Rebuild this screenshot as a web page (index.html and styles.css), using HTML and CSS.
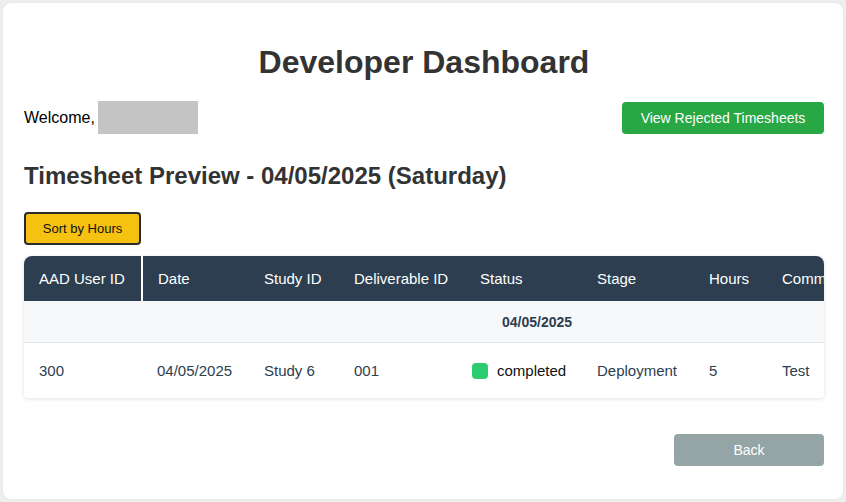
FILE: index.html
```html
<!DOCTYPE html>
<html>
<head>
<meta charset="utf-8">
<link rel="stylesheet" href="styles.css">
</head>
<body>
<div class="card">
  <h1 class="title">Developer Dashboard</h1>
  <div class="welcome-row">
    <div class="welcome">Welcome, <span class="name-box"></span></div>
    <button class="btn btn-green">View Rejected Timesheets</button>
  </div>
  <h2 class="subtitle">Timesheet Preview - 04/05/2025 (Saturday)</h2>
  <button class="btn btn-sort">Sort by Hours</button>
  <div class="table-wrap">
    <table class="sheet">
      <colgroup>
        <col class="c1"><col class="c2"><col class="c3"><col class="c4"><col class="c5"><col class="c6"><col class="c7"><col class="c8">
      </colgroup>
      <thead>
        <tr>
          <th class="first">AAD User ID</th>
          <th>Date</th>
          <th>Study ID</th>
          <th>Deliverable ID</th>
          <th>Status</th>
          <th>Stage</th>
          <th>Hours</th>
          <th>Comments</th>
        </tr>
      </thead>
      <tbody>
        <tr class="group-row"><td colspan="8">04/05/2025</td></tr>
        <tr class="data-row">
          <td>300</td>
          <td>04/05/2025</td>
          <td>Study 6</td>
          <td>001</td>
          <td class="status"><span class="dot"></span>completed</td>
          <td>Deployment</td>
          <td>5</td>
          <td>Test</td>
        </tr>
      </tbody>
    </table>
  </div>
  <div class="footer">
    <button class="btn btn-back">Back</button>
  </div>
</div>
</body>
</html>
```
FILE: styles.css
```css
* { box-sizing: border-box; }
html, body { margin: 0; padding: 0; }
body {
  background: #eeeeee;
  padding: 3px;
  font-family: "Liberation Sans", Arial, sans-serif;
  color: #222;
}
.card {
  background: #fff;
  border-radius: 8px;
  padding: 20px 19px 20px 21px;
  height: 496px;
  box-shadow: 0 0 3px rgba(0,0,0,0.06);
}
.title {
  margin: 21px 0 20px;
  font-size: 32px;
  line-height: 37px;
  text-align: center;
  color: #333;
  font-weight: bold;
}
.welcome-row {
  display: flex;
  justify-content: space-between;
  align-items: center;
  height: 33px;
}
.welcome {
  display: flex;
  align-items: center;
  font-size: 16px;
  color: #000;
  gap: 3px;
}
.name-box {
  display: inline-block;
  width: 100px;
  height: 33px;
  background: #c4c4c4;
}
.btn {
  font-family: "Liberation Sans", Arial, sans-serif;
  border: none;
  cursor: pointer;
}
.btn-green {
  background: #28a745;
  color: #fff;
  font-size: 14px;
  height: 32px;
  padding: 0 16px;
  border-radius: 4px;
  width: 202px;
}
.subtitle {
  margin: 28px 0 22px;
  font-size: 24px;
  line-height: 28px;
  color: #333;
  font-weight: bold;
}
.btn-sort {
  display: block;
  background: #f5c211;
  border: 2px solid #2b2b2b;
  border-radius: 4px;
  color: #111;
  font-size: 13px;
  height: 33px;
  width: 117px;
  padding: 0;
}
.table-wrap {
  margin-top: 11px;
  overflow: hidden;
  border-radius: 8px 8px 4px 4px;
  box-shadow: 0 1px 4px rgba(0,0,0,0.12);
}
.sheet {
  border-collapse: collapse;
  table-layout: fixed;
  width: 1026px;
  font-size: 15px;
}
.c1 { width: 118px; }
.c2 { width: 107px; }
.c3 { width: 90px; }
.c4 { width: 126px; }
.c5 { width: 117px; }
.c6 { width: 112px; }
.c7 { width: 73px; }
.c8 { width: 283px; }
.sheet th {
  background: #2c3e50;
  color: #fff;
  font-weight: normal;
  text-align: left;
  height: 45px;
  padding: 0 15px;
  white-space: nowrap;
}
.sheet th.first { border-right: 2px solid #fff; }
.group-row td {
  background: #f7f8fa;
  height: 41px;
  padding-top: 2px;
  text-align: center;
  font-weight: bold;
  color: #2c3e50;
  font-size: 14px;
  border-bottom: 1px solid #e3e6ea;
}
.data-row td {
  height: 56px;
  padding: 0 15px;
  color: #2c3e50;
  white-space: nowrap;
}
.data-row td.status {
  padding-left: 7px;
  color: #111;
}
.dot {
  display: inline-block;
  width: 16px;
  height: 16px;
  border-radius: 4px;
  background: #2ecc71;
  vertical-align: -3px;
  margin-right: 9px;
}
.footer {
  display: flex;
  justify-content: flex-end;
  margin-top: 36px;
}
.btn-back {
  background: #95a5a6;
  color: #fff;
  font-size: 14px;
  width: 150px;
  height: 32px;
  border-radius: 4px;
}
```
